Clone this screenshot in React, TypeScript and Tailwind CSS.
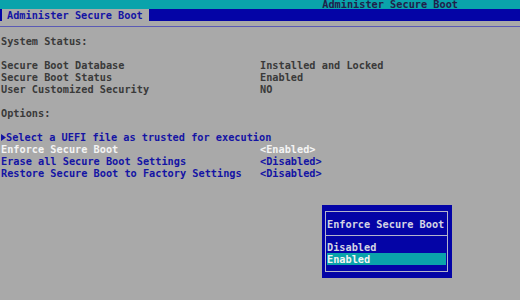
import React from 'react';

type Row = { label?: string; value?: string; tone?: 'gray' | 'blue' | 'white'; arrow?: boolean };

const rows: Row[] = [
  { label: 'System Status:' },
  {},
  { label: 'Secure Boot Database', value: 'Installed and Locked' },
  { label: 'Secure Boot Status', value: 'Enabled' },
  { label: 'User Customized Security', value: 'NO' },
  {},
  { label: 'Options:' },
  {},
  { label: 'Select a UEFI file as trusted for execution', tone: 'blue', arrow: true },
  { label: 'Enforce Secure Boot', value: '<Enabled>', tone: 'white' },
  { label: 'Erase all Secure Boot Settings', value: '<Disabled>', tone: 'blue' },
  { label: 'Restore Secure Boot to Factory Settings', value: '<Disabled>', tone: 'blue' },
];

const toneClass = {
  gray: 'text-[#3a3a3a]',
  blue: 'text-[#1414a4]',
  white: 'text-[#f4f4f4]',
};

export default function App() {
  return (
    <div className="relative w-[520px] h-[300px] overflow-hidden bg-[#a9a9a9] font-['DejaVu_Sans_Mono','Liberation_Mono',monospace] text-[10.25px] font-bold">
      {/* top title strip */}
      <div className="h-[9px] bg-[#0aa3ab] flex justify-end pr-[62px]">
        <span className="leading-[9px] text-[#20204a]">Administer Secure Boot</span>
      </div>

      {/* tab bar */}
      <div className="h-[12px] bg-[#0404a6] pl-[2px]">
        <div className="w-[147px] h-full bg-[#a9a9a9] pl-[5px] leading-[12px] text-[#1414a4]">
          Administer Secure Boot
        </div>
      </div>
      <div className="mt-[5px] h-px bg-[#5a5ab4]" />

      {/* main form */}
      <div className="pt-[8px] pl-[1px] leading-[12px]">
        {rows.map((r, i) => (
          <div key={i} className={`grid grid-cols-[259px_auto] h-[12px] ${toneClass[r.tone ?? 'gray']}`}>
            <div className="flex items-center whitespace-pre">
              {r.arrow && (
                <span className="w-[6.17px] flex items-center">
                  <svg width="5" height="7" viewBox="0 0 5 7">
                    <path d="M0 0L5 3.5L0 7Z" fill="currentColor" />
                  </svg>
                </span>
              )}
              {r.label ?? ''}
            </div>
            <div className="whitespace-pre">{r.value ?? ''}</div>
          </div>
        ))}
      </div>

      {/* popup */}
      <div className="absolute left-[322px] top-[205px] w-[130px] h-[73px] bg-[#0404a6] pt-[6px] pb-[6px] pl-[3px] pr-[4px]">
        <div className="h-full border border-[#b4b4cc] flex flex-col text-[#d4d4e4]">
          <div className="mt-[6px] pl-[1px] leading-[12px]">Enforce Secure Boot</div>
          <div className="mt-[5px] h-px bg-[#b4b4cc]" />
          <div className="mt-[6px] pl-[1px] leading-[11px]">Disabled</div>
          <div className="mx-[1px] bg-[#0aa3ab] text-[#f4f4f4] leading-[12px]">Enabled</div>
        </div>
      </div>
    </div>
  );
}
